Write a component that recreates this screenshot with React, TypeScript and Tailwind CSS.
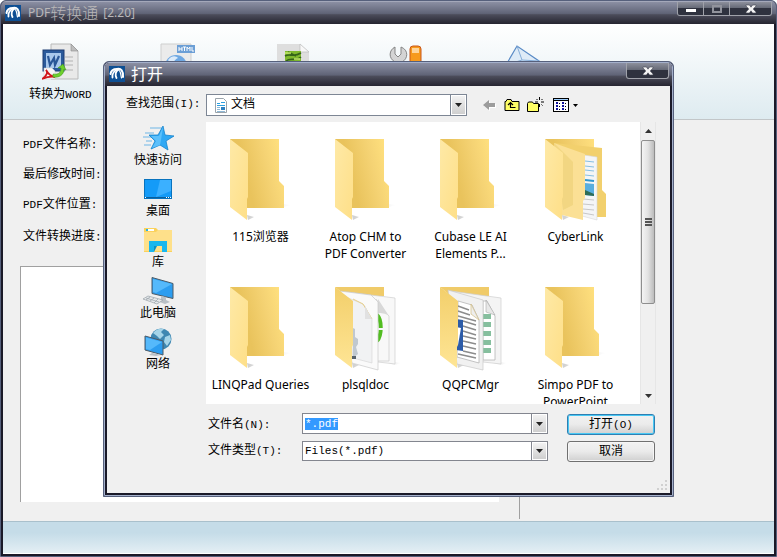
import { useEffect, useRef } from "react";
import type { ReactNode } from "react";

const song = "font-['Liberation_Mono','Noto_Sans_CJK_SC',monospace]";

function Latin({ children }: { children: ReactNode }) {
  return <span className="text-[11px]">{children}</span>;
}

function Logo() {
  return (
    <svg viewBox="0 0 16 16" className="size-4 shrink-0" aria-hidden="true">
      <rect width="16" height="16" fill="#0e4f93" />
      <g fill="none" stroke="#fff" strokeLinecap="round">
        <path d="M1.500 8C2 4.500 5 3 8 3" strokeWidth="2" />
        <path d="M3.500 11.500C3 8 5 5 8 3.500" strokeWidth="1.800" />
        <path d="M7.500 12C6 9 6.500 6 9 3.500" strokeWidth="1.800" />
        <path d="M8 3c4-1 6.500 2 6 8" strokeWidth="2" />
        <path d="M9.500 4c2.500 1 2 4 3 8" strokeWidth="1.200" />
      </g>
    </svg>
  );
}

function CloseGlyph() {
  return (
    <svg viewBox="0 0 12 10" className="h-[10px] w-3" aria-hidden="true">
      <path d="M1 1h3.400L6 3.200 7.600 1H11v1L8.200 5 11 8v1H7.600L6 6.800 4.400 9H1V8l2.800-3L1 2z" fill="#f4f4f4" stroke="#444754" strokeWidth=".6" />
    </svg>
  );
}

const titleBar =
  "bg-[linear-gradient(to_bottom,#8b8fa3_0%,#606477_52%,#4b4c5a_58%,#262531_100%)]";

const capButton =
  "flex items-center justify-center border-[#a0a2aa] bg-linear-to-b from-[#8d909c] from-0% via-[#666a77] via-45% to-[#2f323f] to-50%";

/* Toolbar drawings */

function WordIcon() {
  return (
    <svg viewBox="0 0 38 38" className="size-[38px]" aria-hidden="true">
      <path d="M9 1h20l7 7v28H9z" fill="#e9e9e9" stroke="#b9b9b9" />
      <path d="M29 1l7 7h-7z" fill="#bdbdbd" stroke="#8e8e8e" strokeWidth=".6" />
      <path d="M23 14h8M23 18h8M23 22h8M20 27h11" stroke="#c5c5c5" strokeWidth="1.500" />
      <rect x="1" y="7" width="21" height="21" fill="#2b5a9b" stroke="#1e3d72" />
      <rect x="4" y="10" width="15" height="15" fill="#a9c8ec" />
      <path d="M6 13l2 9 4-7 1 7 4-9" fill="none" stroke="#2a5797" strokeWidth="2.200" />
      <path d="M2 25h8l3 3v8H2z" fill="#f6f6f6" stroke="#ccc" strokeWidth=".5" />
      <path d="M0 36c5-3 6-7 4-9 3 5 5 6 9 7-5-1-8 0-13 2z" fill="none" stroke="#d0161c" strokeWidth="1.800" />
      <path d="M11 31c6 1 8-2 8-6h-3l5-4 3 6-2-1c0 6-5 9-11 8z" fill="#6ed02c" stroke="#3f9a16" strokeWidth=".6" />
    </svg>
  );
}

function HtmlIcon() {
  return (
    <svg viewBox="0 0 38 38" className="size-[38px]" aria-hidden="true">
      <path d="M4 1h30v36H4z" fill="#ebebeb" stroke="#cfcfcf" />
      <circle cx="19" cy="23" r="11" fill="#6fa8e2" />
      <path d="M11 17c4-5 8-4 10-2-3 1-3 4-8 5z" fill="#dcebfa" />
      <rect x="20" y="2" width="18" height="8" fill="#6c9fd6" />
      <path d="M22 4v4M25 4v4M22 6h3M26 4h3M27.500 4v4M30 8V4l1.500 2L33 4v4M35 4v4h2" stroke="#fff" strokeWidth="1" fill="none" />
    </svg>
  );
}

function ImageIcon() {
  return (
    <svg viewBox="0 0 38 38" className="size-[38px]" aria-hidden="true">
      <path d="M5 1h23l9 8v28H5z" fill="#dedede" />
      <path d="M28 1l9 8h-9z" fill="#f8f8f8" stroke="#bcbcbc" strokeWidth=".7" />
      <rect x="13" y="8" width="16" height="18" fill="#7fb92d" />
      <path d="M13 13c5-3 8 2 16-3M14 18c5-4 9 1 15-4M16 9l8 4" stroke="#35641a" strokeWidth="1.600" fill="none" />
      <path d="M13 10h6M22 16h6" stroke="#c3ea6a" strokeWidth="1.400" />
    </svg>
  );
}

function ToolsIcon() {
  return (
    <svg viewBox="0 0 38 38" className="size-[38px]" aria-hidden="true">
      <path d="M8 4v7l3 3 3-3V4c8 3 7 12 1 15v16H8V19C1 15 2 7 8 4z" fill="#d4d4d4" stroke="#858585" />
      <rect x="23" y="3" width="11" height="32" rx="3" fill="#f79a1d" stroke="#c9561a" />
      <path d="M25 5h7v5h-7z" fill="#fed49a" />
    </svg>
  );
}

function MailIcon() {
  return (
    <svg viewBox="0 0 38 38" className="size-[38px]" aria-hidden="true">
      <path d="M4 22L15 3l22 15-10 16z" fill="#deebf7" stroke="#5a8bc6" strokeWidth="1.200" />
      <path d="M15 3l5 14 17 1M4 22l16-5" fill="none" stroke="#86add8" />
    </svg>
  );
}

const tools = [
  { name: "转换为HTML", icon: <HtmlIcon /> },
  { name: "转换为图片", icon: <ImageIcon /> },
  { name: "设置", icon: <ToolsIcon /> },
  { name: "联系我们", icon: <MailIcon /> },
];

/* Places bar drawings */

function StarIcon() {
  return (
    <svg viewBox="0 0 32 26" className="h-[26px] w-8" aria-hidden="true">
      <path d="M8 3h12M3 8h9M1 12h9M4 16h6M2 20h7" stroke="#6fb6e6" strokeWidth="1" />
      <path d="M21 1l2 9 9 1-8 5 2 9-8-5-9 4 4-8-6-6h9z" fill="#2fa8f4" stroke="#1583cc" strokeWidth=".8" />
      <path d="M21 2l-2 13-1 5-8 3 4-7-5-5h8z" fill="#5cc0fb" />
    </svg>
  );
}

function DesktopIcon() {
  return (
    <svg viewBox="0 0 28 20" className="h-5 w-7" aria-hidden="true">
      <rect x=".5" y=".5" width="27" height="19" fill="#149bf8" stroke="#0873be" />
      <path d="M16 1h11v11L12 18z" fill="#3bb0ff" />
      <path d="M1 18.500h26" stroke="#0a5f9c" />
      <path d="M1 18.500h1M22 18.500h1M24 18.500h1M26 18.500h1" stroke="#fff" />
    </svg>
  );
}

function LibraryIcon() {
  return (
    <svg viewBox="0 0 28 25" className="h-[25px] w-7" aria-hidden="true">
      <path d="M0 0h12l2 2h14v22H0z" fill="#fbd25c" />
      <path d="M0 4h12l2-2h14v21H0z" fill="#fee08a" />
      <path d="M2 2h8" stroke="#fff" strokeWidth="2" />
      <path d="M2 2h2" stroke="#25b4e8" strokeWidth="2" />
      <path d="M5 13h18v11h-5v-6h-8v6H5z" fill="#19b7ee" />
      <path d="M10 18v6l3-6z" fill="#0d8fc0" />
    </svg>
  );
}

function ComputerIcon() {
  return (
    <svg viewBox="0 0 32 28" className="h-7 w-8" aria-hidden="true">
      <path d="M10 .5l21 6v15l-21-5z" fill="#2c9df0" stroke="#4c5a66" strokeWidth="1" />
      <path d="M11 2l19 5-16 9-3-1z" fill="#55b9fb" />
      <path d="M19 19l5 1v3l4 2-5 2-8-3 4-2z" fill="#b9c0c6" />
      <path d="M6 19l15 4-6 4-14-5z" fill="#e6e9eb" stroke="#98a1a8" strokeWidth=".7" />
      <path d="M4 21l13 4M8 20l-4 3M12 21l-4 3M16 22l-4 4" stroke="#98a1a8" strokeWidth=".7" />
    </svg>
  );
}

function NetworkIcon() {
  return (
    <svg viewBox="0 0 28 28" className="size-7" aria-hidden="true">
      <circle cx="17" cy="11" r="10.500" fill="#3f87b1" />
      <path d="M9 5c3-4 7-5 11-4l-3 3 3 3-4 4-3-3zM21 9l5-2 1 5-4 6-3-4z" fill="#a5d4e8" />
      <path d="M1 8l18 5v14L1 22z" fill="#2c9df0" stroke="#4c5a66" strokeWidth="1" />
      <path d="M2 9.500l16 4.500-12 8-4-1z" fill="#55b9fb" />
      <path d="M8 25l5 1 4 1-5 1-7-1z" fill="#b9c0c6" />
    </svg>
  );
}

const places = [
  { name: "快速访问", icon: <StarIcon /> },
  { name: "桌面", icon: <DesktopIcon /> },
  { name: "库", icon: <LibraryIcon /> },
  { name: "此电脑", icon: <ComputerIcon /> },
  { name: "网络", icon: <NetworkIcon /> },
];

/* Folder thumbnails */

type FolderKind = "empty" | "folders" | "scripts" | "documents";

function FolderArt({ kind }: { kind: FolderKind }) {
  const flap = kind === "scripts" || kind === "documents" ? "url(#flapFull)" : "url(#flap)";
  return (
    <svg viewBox="0 0 80 96" className="h-24 w-20" aria-hidden="true">
      <defs>
        <linearGradient id="back" x1="0" y1="0.600" x2="1" y2="0.300">
          <stop offset=".3" stopColor="#e9c35c" />
          <stop offset=".7" stopColor="#f5d374" />
          <stop offset="1" stopColor="#ffe07e" />
        </linearGradient>
        <linearGradient id="flap" x1="0" y1="0" x2="1" y2="1">
          <stop offset="0" stopColor="#fee9a6" />
          <stop offset="1" stopColor="#fedf88" />
        </linearGradient>
        <linearGradient id="flapFull" x1="0" y1="0" x2="0" y2="1">
          <stop offset="0" stopColor="#f3cf6b" />
          <stop offset="1" stopColor="#fee595" />
        </linearGradient>
        <linearGradient id="shade" x1="0" y1="0" x2="1" y2="0">
          <stop offset="0" stopColor="#d0d0d0" />
          <stop offset="1" stopColor="#ffffff" />
        </linearGradient>
      </defs>
      <path d="M26 83l7 2-6 3zM63 72l7 1-7 2z" fill="url(#shade)" />
      {kind === "empty" && <path d="M9 7h49v42l5 5v22H20L9 60z" fill="url(#back)" />}
      {kind === "folders" && (
        <g>
          <path d="M9 7h49v42l5 27H26z" fill="url(#back)" />
          <path d="M18 11l48 5v42l4 4v23H50z" fill="#f2d06d" />
          <path d="M48 23l13 2v63l-15-4z" fill="#f4f5f6" stroke="#d6d6d6" strokeWidth=".6" />
          <path d="M49 29l9 1M49 34l9 1M49 38l9 1M49 43l9 1" stroke="#86bfe2" strokeWidth="1" />
          <path d="M49 48l9 1" stroke="#3097d0" strokeWidth="1.800" />
          <path d="M49 51l9 1v12l-9-1z" fill="#59aedf" />
          <path d="M49 58l9 4v2l-9-1z" fill="#2f6c56" />
          <path d="M47 67l11 1M47 72l11 1M47 77l11 1M47 81l11 2" stroke="#c7c7c7" strokeWidth="1" />
          <path d="M18 11l31 11v44l-2 3v19l-21-5z" fill="#fbe095" />
          <path d="M18 11l19 19v43l-10 5z" fill="#eed27b" opacity=".7" />
        </g>
      )}
      {kind === "scripts" && (
        <g>
          <path d="M9 7h49v9H20z" fill="#f0cb69" />
          <path d="M52 80l17 2 6 1-6 2z" fill="url(#shade)" />
          <path d="M21 12l48 6v66l-17-2z" fill="#f8f8f8" stroke="#cfcfcf" strokeWidth=".7" />
          <path d="M50 19c6 7 7 12 13 17v45h-11" fill="none" stroke="#cfcfcf" strokeWidth=".8" />
          <path d="M52 19l11 17c-4-3-8-3-11-3z" fill="#d8d8d8" />
          <path d="M51 35c5 5 5 20 0 26" fill="none" stroke="#52bd21" strokeWidth="4" />
          <path d="M51 49h6" stroke="#f8f8f8" strokeWidth="2" />
          <path d="M14 11l31 4 7 7v68l-26-7z" fill="#fafafa" stroke="#c9c9c9" strokeWidth=".7" />
          <path d="M20 17l17 7c5 6 4 9 9 15v44l-19-5z" fill="#f1f2f3" stroke="#d9d9d9" strokeWidth=".7" />
          <path d="M27 19l10 5 9 15" fill="none" stroke="#e8cf8a" strokeWidth="1" />
          <path d="M39 26v13h7z" fill="#e1e1e1" />
          <path d="M27 48l2 1v8l3 2v5l-2 3 2 7-5 4z" fill="#c0c8cf" />
          <path d="M26 76h4v3h-4z" fill="#58636c" />
        </g>
      )}
      {kind === "documents" && (
        <g>
          <path d="M9 7h49v9H20z" fill="#f0cb69" />
          <path d="M52 80l18 2 6 1-6 2z" fill="url(#shade)" />
          <path d="M20 11l50 7v66l-18-2z" fill="#f4f4f4" stroke="#cfcfcf" strokeWidth=".7" />
          <path d="M52 21h4l8 15v44H52z" fill="#fff" stroke="#b5b5b5" strokeWidth=".8" />
          <path d="M55 20v12l9 3z" fill="#e8e8e8" stroke="#aaa" strokeWidth=".6" />
          <path d="M52 34h8v5h-8zM52 42h8v5h-8zM52 51h8v5h-8zM52 60h8v5h-8zM52 68h8v5h-8z" fill="#86bf9e" />
          <path d="M17 10l35 10v70l-26-6z" fill="#f1f1f1" stroke="#c9c9c9" strokeWidth=".7" />
          <path d="M27 21l14 4 7 15v43l-22-6z" fill="#fff" stroke="#b5b5b5" strokeWidth=".8" />
          <path d="M40 24v10l8 6z" fill="#eee" stroke="#d3bd82" strokeWidth=".7" />
          <path d="M27 26l11 4M27 31l12 4M27 36l18 5M32 41l13 4M32 46l13 4M32 51l13 4M32 56l13 3M32 61l13 3M32 66l13 3M32 71l13 3M27 74l18 4" stroke="#8c8c8c" strokeWidth="1.400" />
          <path d="M25 39l7 1v31l-7-1z" fill="#2d5ca8" />
          <path d="M25 47l5 1-3 17h-2z" fill="#fff" />
        </g>
      )}
      <path d="M9 7l18 14v44l-1 2v21L9 75z" fill={flap} />
    </svg>
  );
}

const files: { lines: string[]; kind: FolderKind }[] = [
  { lines: ["115浏览器"], kind: "empty" },
  { lines: ["Atop CHM to", "PDF Converter"], kind: "empty" },
  { lines: ["Cubase LE AI", "Elements P..."], kind: "empty" },
  { lines: ["CyberLink"], kind: "folders" },
  { lines: ["LINQPad Queries"], kind: "empty" },
  { lines: ["plsqldoc"], kind: "scripts" },
  { lines: ["QQPCMgr"], kind: "documents" },
  { lines: ["Simpo PDF to", "PowerPoint"], kind: "empty" },
];

/* Dialog parts */

function DropArrow() {
  return (
    <span className="pointer-events-none flex h-full w-[15px] items-center justify-center border border-white bg-linear-to-b from-[#f2f2f2] to-[#cfcfcf]">
      <svg viewBox="0 0 7 4" className="h-1 w-[7px]" aria-hidden="true">
        <path d="M0 0h7L3.500 4z" fill="#222" />
      </svg>
    </span>
  );
}

function NavButtons() {
  return (
    <div className="ml-4 flex items-center gap-[7px]">
      <button type="button" aria-label="后退">
        <svg viewBox="0 0 14 12" className="h-3 w-[14px]">
          <path d="M1 7l6-5v3h6v4H7v3z" fill="#fff" />
          <path d="M0 6l6-5v3h6v4H6v3z" fill="#9c9c9c" />
        </svg>
      </button>
      <button type="button" aria-label="向上一级">
        <svg viewBox="0 0 16 14" className="h-[14px] w-4">
          <path d="M1 3.500h1l1-2h4l1 2h7v9H1z" fill="#ffff66" stroke="#000" />
          <path d="M6.500 4.500v5h5M4 7l2.500-2.500L9 7" fill="none" stroke="#000" strokeWidth="1.200" />
        </svg>
      </button>
      <button type="button" aria-label="新建文件夹">
        <svg viewBox="0 0 17 16" className="h-4 w-[17px]">
          <path d="M.5 6.500l1-1.500h4l1 1.500h5v8H.5z" fill="#ffff66" stroke="#000" />
          <path d="M12.500 0v3M12.500 7v3M8 5h3M14 5h3M9.500 2l1 1M15.500 2l-1 1M15.500 8.500l-1-1" stroke="#000" strokeWidth="1" />
        </svg>
      </button>
      <button type="button" aria-label="查看" className="ml-0.5 flex items-center gap-1">
        <svg viewBox="0 0 16 14" className="h-[14px] w-4">
          <rect x=".5" y=".5" width="15" height="13" fill="#fff" stroke="#000" />
          <path d="M1 1.500h14" stroke="#9fd0ff" />
          <path d="M1 2.500h14" stroke="#000" />
          <path d="M3 5h2M3 8h2M3 11h2M9 5h2M9 8h2M9 11h2" stroke="#11119a" strokeWidth="2" />
          <path d="M6 5.500h1M6 8.500h1M6 11.500h1M12 5.500h1M12 8.500h1M12 11.500h1" stroke="#000" strokeWidth="1" />
        </svg>
        <svg viewBox="0 0 5 3" className="h-[3px] w-[5px]">
          <path d="M0 0h5L2.500 3z" />
        </svg>
      </button>
    </div>
  );
}

function ScrollBar() {
  return (
    <div className="flex w-4 flex-col border-x border-[#e6e6e6] bg-[#f0f0f0]" aria-hidden="true">
      <div className="flex h-[18px] items-center justify-center">
        <svg viewBox="0 0 7 4" className="h-1 w-[7px]"><path d="M3.500 0L7 4H0z" fill="#333" /></svg>
      </div>
      <div className="flex h-[164px] flex-col items-center justify-center gap-px rounded-xs border border-[#8e8e8e] bg-linear-to-r from-[#f4f4f4] via-[#e2e2e2] to-[#bcbcbc]">
        <span className="h-0.5 w-[7px] bg-[#555]" />
        <span className="h-0.5 w-[7px] bg-[#555]" />
        <span className="h-0.5 w-[7px] bg-[#555]" />
      </div>
      <div className="flex-1" />
      <div className="flex h-4 items-center justify-center">
        <svg viewBox="0 0 7 4" className="h-1 w-[7px]"><path d="M0 0h7L3.500 4z" fill="#333" /></svg>
      </div>
    </div>
  );
}

function OpenDialog() {
  const nameRef = useRef<HTMLInputElement>(null);
  useEffect(() => {
    nameRef.current?.focus();
    nameRef.current?.select();
  }, []);

  return (
    <section
      role="dialog"
      aria-label="打开"
      className="absolute top-[60px] left-[102px] w-[571px] rounded-t-md border border-[#56607c] bg-[#1a1928]"
    >
      <div className="rounded-t-[5px] border border-[#a4b0cb]">
        <header className={`flex h-[23px] items-start justify-between rounded-t-[4px] ${titleBar}`}>
          <h2 className="flex items-center gap-1.5 pt-0.5 pl-1 text-[16px] leading-[18px] text-white">
            <Logo />
            打开
          </h2>
          <button type="button" aria-label="关闭" className={`${capButton} mr-[3px] h-4 w-[43px] rounded-b-[3px] border-x border-b`}>
            <CloseGlyph />
          </button>
        </header>
        <div className={`mx-0.5 mb-0.5 bg-[#f0f0f0] pt-2 ${song} text-[12px] leading-4`}>
          <div className="flex h-[22px] items-center">
            <label htmlFor="look-in" className="w-[99px] pb-0.5 pl-[19px] whitespace-nowrap">
              查找范围<Latin>(I):</Latin>
            </label>
            <div className="flex h-[22px] w-[261px] items-center border border-[#7d8694] bg-white">
              <svg viewBox="0 0 12 15" className="ml-2 h-[15px] w-3 shrink-0" aria-hidden="true">
                <path d="M.5.5h8l3 3v11H.5z" fill="#fff" stroke="#9aa3aa" />
                <path d="M2 5.500h3M6 4.500h4M2 7.500h8" stroke="#2b9fe0" strokeWidth="1.200" />
                <path d="M6 9h4v3H6z" fill="#2c7fc0" />
                <path d="M2 9.500h3M2 11.500h3M2 13.500h8" stroke="#8fb9d6" />
              </svg>
              <select id="look-in" className="min-w-0 flex-1 appearance-none bg-transparent pl-1 text-[12px] leading-4 outline-none">
                <option>文档</option>
              </select>
              <span className="h-full border-l border-[#7d8694]"><DropArrow /></span>
            </div>
            <NavButtons />
          </div>

          <div className="mt-1.5 flex">
            <nav className="flex w-[99px] flex-col items-stretch gap-1 pl-[3px]">
              {places.map((p) => (
                <button key={p.name} type="button" className="flex flex-col items-center">
                  <span className="flex h-8 items-center justify-center">{p.icon}</span>
                  <span className="h-[15px] leading-[15px]">{p.name}</span>
                </button>
              ))}
            </nav>
            <ul className="grid h-[282px] w-[434px] grid-cols-4 content-start gap-y-[18px] overflow-hidden bg-white pt-2.5 pr-3 pl-0.5 font-['Noto_Sans','Noto_Sans_CJK_SC',sans-serif] text-[12px] leading-[17px]">
              {files.map((f) => (
                <li key={f.lines[0]} className="flex h-[130px] flex-col items-center">
                  <FolderArt kind={f.kind} />
                  {f.lines.map((line) => (
                    <span key={line} className="whitespace-nowrap">{line}</span>
                  ))}
                </li>
              ))}
            </ul>
            <ScrollBar />
          </div>

          <form className="mt-[9px] flex pl-[101px]" onSubmit={(e) => e.preventDefault()}>
            <div className="flex flex-col gap-[7px]">
              <div className="flex items-center">
                <label htmlFor="file-name" className="w-[94px] pt-0.5">
                  文件名<Latin>(N):</Latin>
                </label>
                <div className="flex h-[21px] w-[246px] border border-[#83868f] bg-white">
                  <input
                    id="file-name"
                    ref={nameRef}
                    defaultValue="*.pdf"
                    className="min-w-0 flex-1 pl-0.5 text-[11px] leading-3 outline-none selection:bg-[#3399ff] selection:text-white"
                  />
                  <button type="button" aria-label="文件名列表" className="border-l border-[#83868f]"><DropArrow /></button>
                </div>
              </div>
              <div className="flex items-center">
                <label htmlFor="file-type" className="w-[94px]">
                  文件类型<Latin>(T):</Latin>
                </label>
                <div className="flex h-5 w-[246px] border border-[#83868f] bg-white">
                  <select id="file-type" className="min-w-0 flex-1 appearance-none pl-0.5 text-[11px] outline-none">
                    <option>Files(*.pdf)</option>
                  </select>
                  <span className="border-l border-[#83868f]"><DropArrow /></span>
                </div>
              </div>
            </div>
            <div className="ml-[19px] flex flex-col gap-1.5 pt-px">
              <button type="submit" className="h-[21px] w-[88px] rounded-[3px] border border-[#2f7fb2] bg-linear-to-b from-[#f2f2f2] from-0% via-[#ebebeb] via-49% to-[#d0d0d0] inset-ring inset-ring-[#48c8f4]">
                打开<Latin>(O)</Latin>
              </button>
              <button type="button" className="h-[21px] w-[88px] rounded-[3px] border border-[#707070] bg-linear-to-b from-[#f2f2f2] from-0% via-[#ebebeb] via-49% to-[#d0d0d0] inset-ring inset-ring-[#f6f6f6]">
                取消
              </button>
            </div>
          </form>
          <div className="flex h-[31px] items-end justify-end pr-0.5 pb-0.5">
            <svg viewBox="0 0 11 11" className="size-[11px]" aria-hidden="true">
              <path d="M8 0h2v2H8zM4 4h2v2H4zM8 4h2v2H8zM0 8h2v2H0zM4 8h2v2H4zM8 8h2v2H8z" fill="#d0d0d0" />
            </svg>
          </div>
        </div>
      </div>
    </section>
  );
}

export default function App() {
  return (
    <div className="relative flex min-h-screen flex-col overflow-hidden rounded-t-md border border-[#56607c] bg-[#1a1928] font-['Noto_Sans','Noto_Sans_CJK_SC',sans-serif] text-black">
      <header className={`flex h-[23px] items-start justify-between border-t border-[#a4a8ba] ${titleBar}`}>
        <h1 className="flex items-center pt-0.5 pl-1 text-[12px] leading-[18px] text-[#b9b7b9]">
          <Logo />
          <span className="ml-[7px]">PDF</span>
          <span className="text-[16px] font-light">转换通</span>
          <span className="ml-[5px]">[2.20]</span>
        </h1>
        <div className="mr-1 flex h-[14px] divide-x divide-[#a0a2aa] overflow-hidden rounded-b-[3px] border-x border-b border-[#a0a2aa]">
          <button type="button" aria-label="最小化" className={`${capButton} w-[26px]`}>
            <span className="mt-1 h-[3px] w-[10px] bg-white" />
          </button>
          <button type="button" aria-label="最大化" className={`${capButton} w-[26px]`}>
            <span className="h-2 w-[10px] border-2 border-[#91939c]" />
          </button>
          <button type="button" aria-label="关闭" className={`${capButton} w-[41px]`}>
            <CloseGlyph />
          </button>
        </div>
      </header>

      <div className="mx-0.5 mb-0.5 flex flex-1 flex-col bg-[#f0f0f0]">
        <nav className="flex h-24 border-b border-[#c2c6c8] bg-linear-to-b from-white to-[#deebf0] pt-[19px]">
          <button type="button" className={`${song} flex w-[115px] flex-col items-center text-[12px] leading-4`}>
            <WordIcon />
            <span className="mt-1.5 whitespace-nowrap">转换为<Latin>WORD</Latin></span>
          </button>
          {tools.map((t) => (
            <button key={t.name} type="button" aria-label={t.name} className="flex w-[115px] flex-col items-center">
              {t.icon}
            </button>
          ))}
        </nav>

        <main className="flex flex-1">
          <div className={`mb-0.5 flex w-[517px] flex-col border-r border-[#a0a0a0] pt-2.5 pl-[17px] ${song} text-[12px]`}>
            <div className="flex flex-col pl-[3px] leading-[30px]">
              <p className="h-[30px]"><Latin>PDF</Latin>文件名称<Latin>:</Latin></p>
              <p className="h-[30px]">最后修改时间<Latin>:</Latin></p>
              <p className="h-[30px]"><Latin>PDF</Latin>文件位置<Latin>:</Latin></p>
              <p className="mt-0.5 h-[30px]">文件转换进度<Latin>:</Latin></p>
            </div>
            <textarea
              aria-label="转换列表"
              className="mt-3.5 mb-[17px] w-[479px] flex-1 resize-none border-t border-l border-[#a0a0a0] bg-white outline-none"
            />
          </div>
        </main>

        <footer className="h-[33px] border-t border-b border-t-[#a9c0cc] border-b-white bg-linear-to-b from-[#c5dce8] from-35% to-[#e4eff4]" />
      </div>

      <OpenDialog />
    </div>
  );
}
